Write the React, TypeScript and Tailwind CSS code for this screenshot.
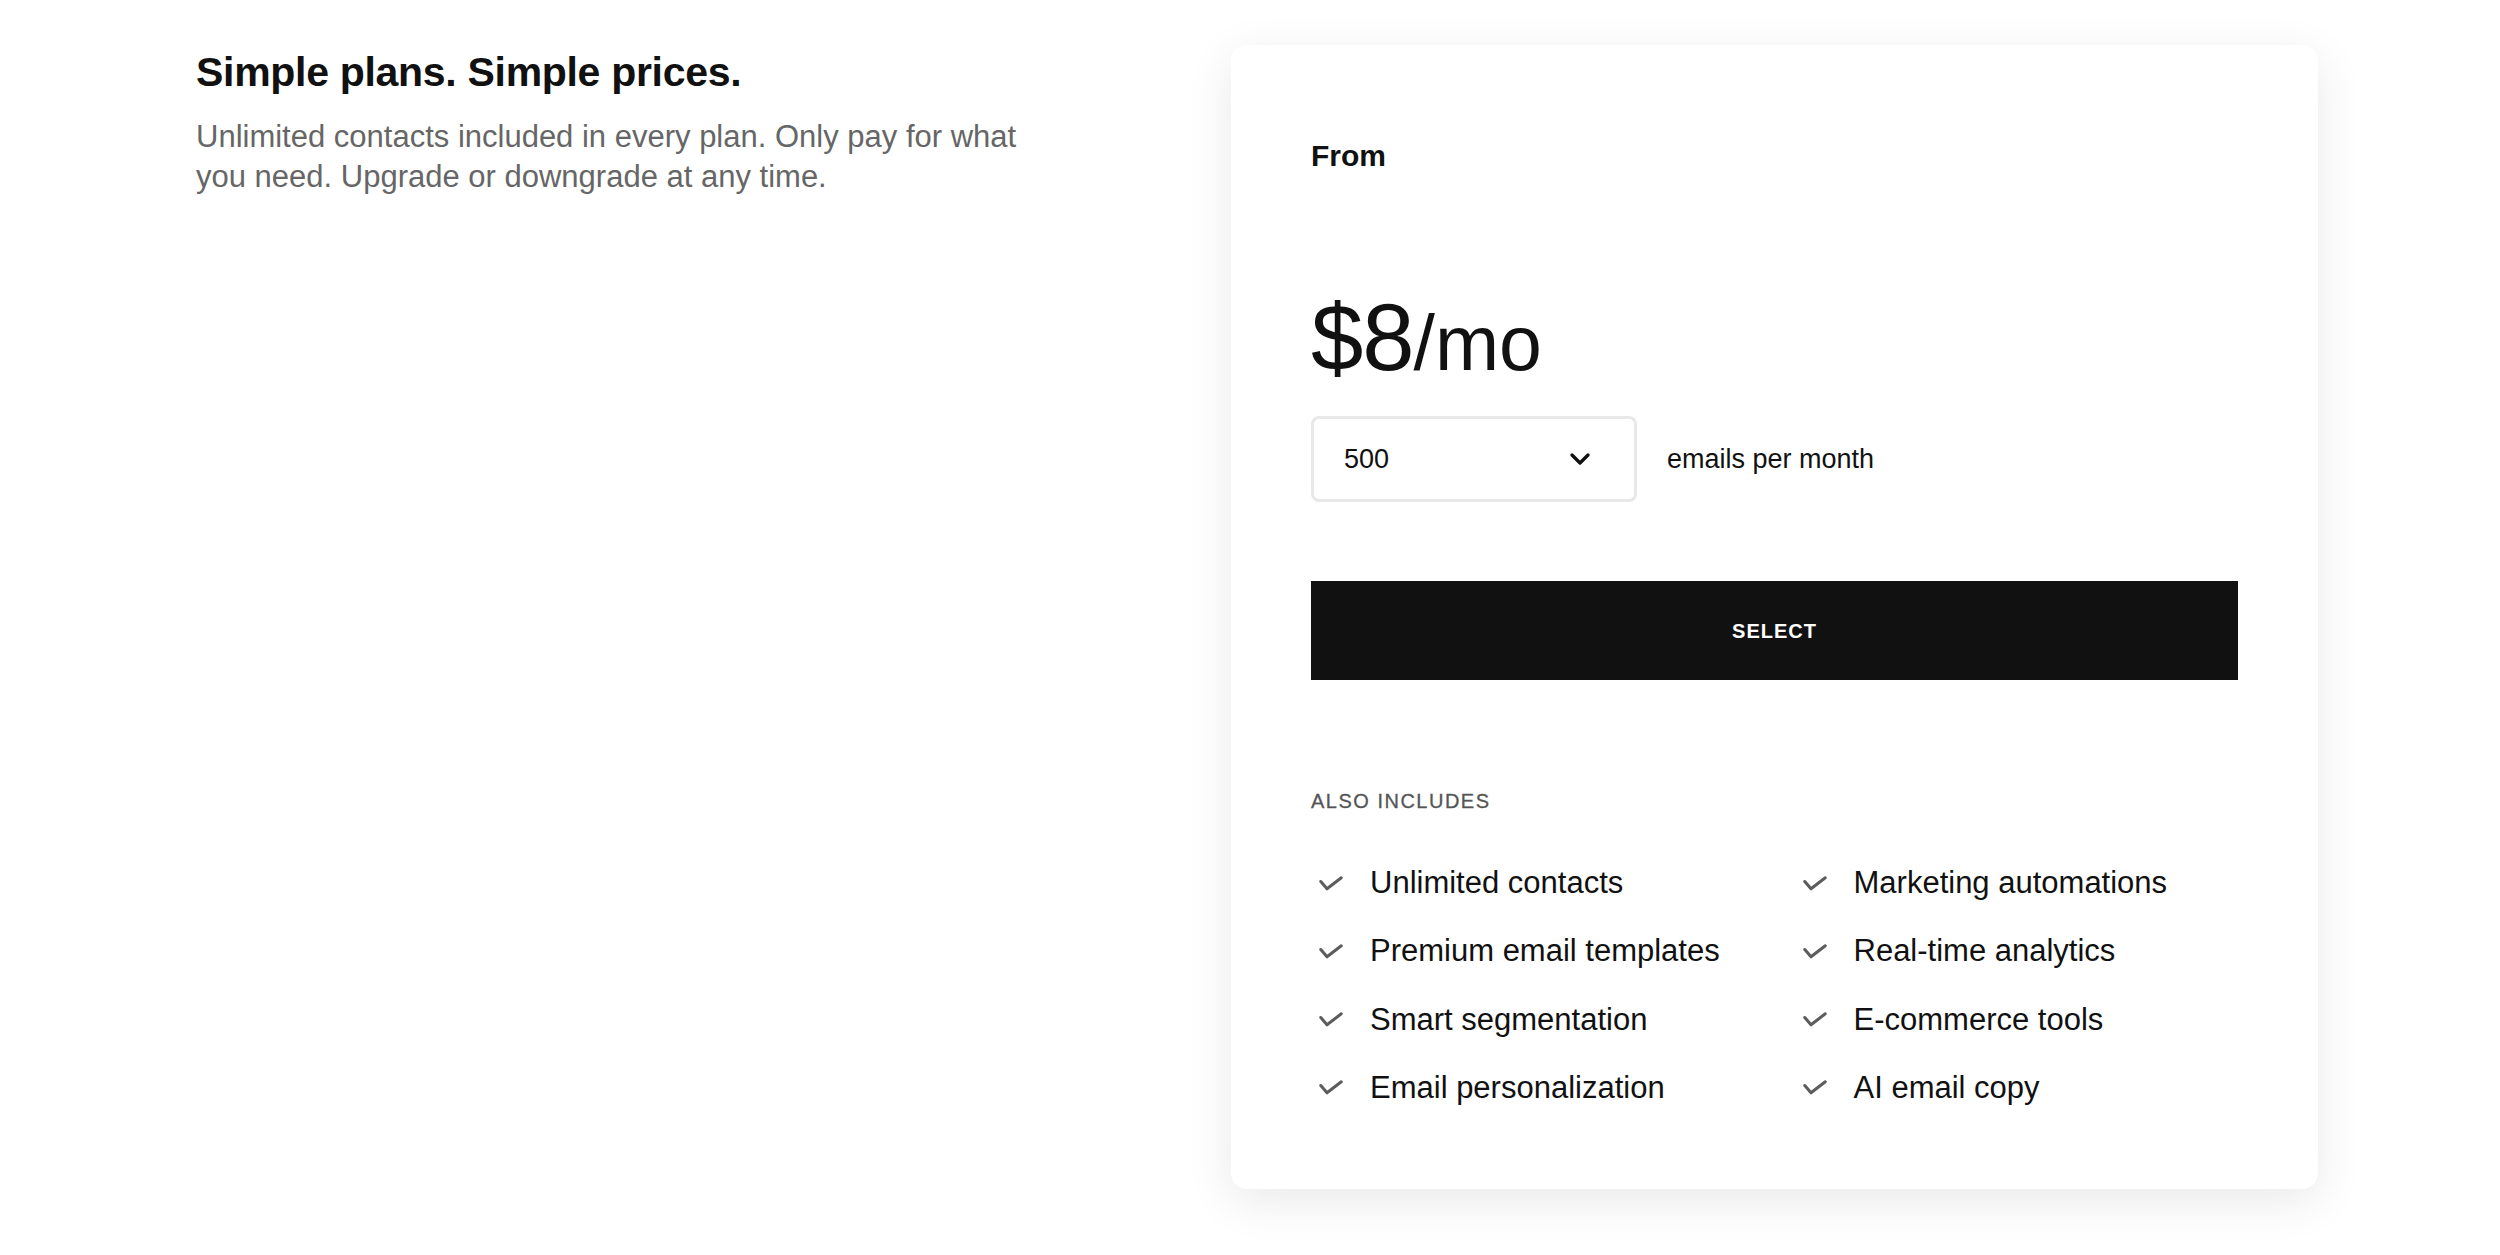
import { ChevronDown } from "lucide-react";

const features = [
  "Unlimited contacts",
  "Marketing automations",
  "Premium email templates",
  "Real-time analytics",
  "Smart segmentation",
  "E-commerce tools",
  "Email personalization",
  "AI email copy",
];

function CheckMark() {
  return (
    <svg
      width="24"
      height="15"
      viewBox="0 0 24 15"
      fill="none"
      stroke="#5c5c5c"
      strokeWidth="3"
      strokeLinecap="round"
      strokeLinejoin="round"
      className="ml-[8px] shrink-0"
    >
      <polyline points="1.8,5.5 8,12.8 22.3,1.8" />
    </svg>
  );
}

export default function App() {
  return (
    <div className="min-h-screen w-full bg-white font-['Liberation_Sans',Arial,sans-serif] text-[#111111]">
      <div className="flex items-start pl-[196px] pt-[45px]">
        <div className="w-[1035px] pt-[3px]">
          <h1 className="text-[41px] font-bold leading-[48px] tracking-[-0.3px] text-[#111111]">
            Simple plans. Simple prices.
          </h1>
          <p className="mt-[21px] max-w-[840px] text-[31px] leading-[40px] text-[#666666]">
            Unlimited contacts included in every plan. Only pay for what you need. Upgrade or
            downgrade at any time.
          </p>
        </div>

        <div className="w-[1087px] rounded-[16px] bg-white px-[80px] pb-[83px] pt-[93px] shadow-[0_12px_48px_rgba(0,0,0,0.09)]">
          <div className="text-[30px] font-bold leading-[36px]">From</div>

          <div className="mt-[117px] text-[94px] leading-[94px] tracking-[-1px]">
            $8<span className="text-[77px] tracking-normal">/mo</span>
          </div>

          <div className="mt-[26px] flex items-center">
            <div className="flex h-[86px] w-[326px] items-center justify-between rounded-[8px] border-[3px] border-[#e8e8e8] pl-[30px] pr-[38px]">
              <span className="text-[27px]">500</span>
              <ChevronDown size={32} strokeWidth={2.5} className="text-[#111111]" />
            </div>
            <span className="ml-[30px] text-[27px]">emails per month</span>
          </div>

          <button className="mt-[79px] flex h-[99px] w-full items-center justify-center bg-[#111111] text-[20px] font-bold tracking-[1px] text-white">
            SELECT
          </button>

          <div className="mt-[109px] text-[20px] leading-[24px] tracking-[1.5px] text-[#555555] [-webkit-text-stroke:0.3px_#555555]">
            ALSO INCLUDES
          </div>

          <ul className="mt-[52px] grid grid-cols-2 gap-x-[40px] gap-y-[32.3px]">
            {features.map((f) => (
              <li key={f} className="flex items-center gap-[27px] text-[31px] leading-[36px]">
                <CheckMark />
                <span>{f}</span>
              </li>
            ))}
          </ul>
        </div>
      </div>
    </div>
  );
}
